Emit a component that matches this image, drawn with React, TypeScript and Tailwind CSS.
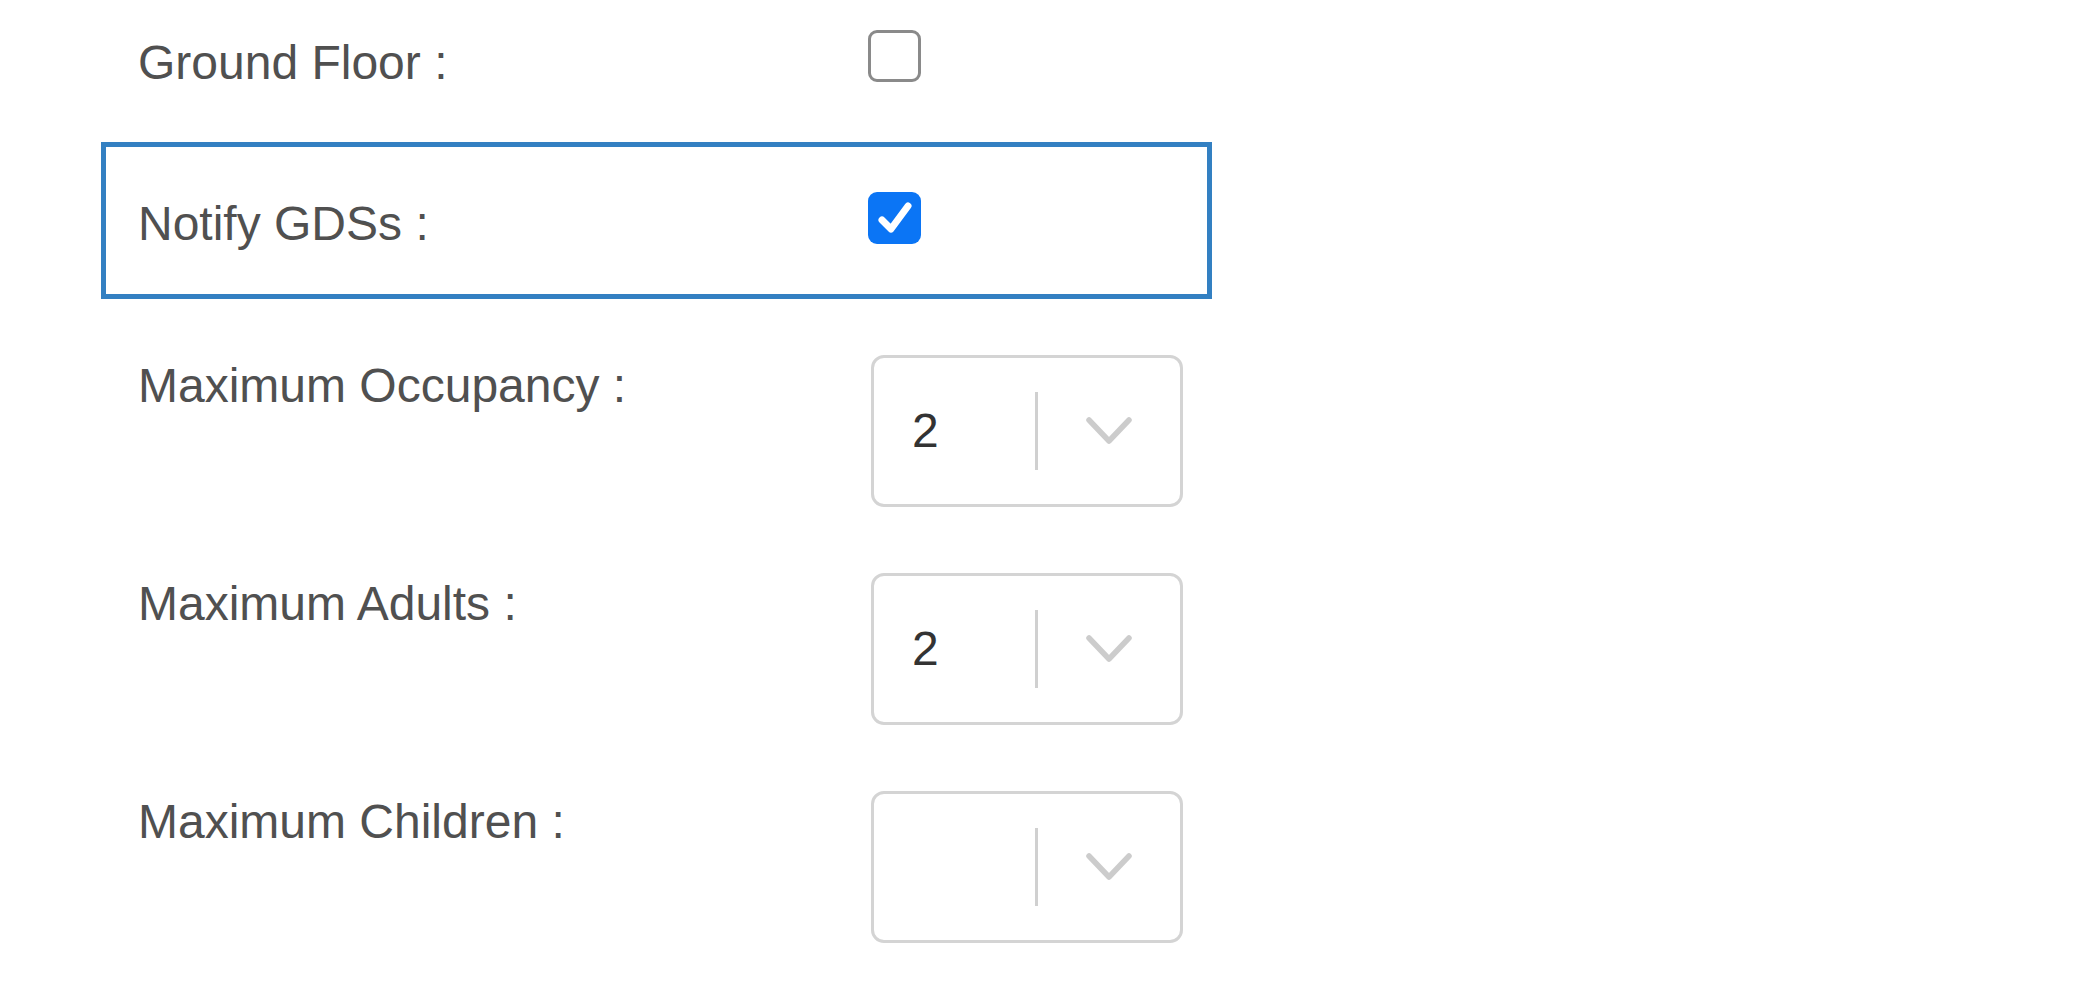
import React from "react";

function Chevron() {
  return (
    <svg width="50" height="32" viewBox="0 0 50 32" fill="none">
      <polyline points="5,5 25,26 45,5" stroke="#cccccc" strokeWidth="5.5" strokeLinecap="round" strokeLinejoin="round" />
    </svg>
  );
}

function Select({ value }: { value: string }) {
  return (
    <div className="flex h-[152px] w-[312px] items-center rounded-[13px] border-[3px] border-[#d4d4d4] bg-white">
      <div className="flex-1 pl-[38px] text-[48px] leading-[52px] text-[#333]">{value}</div>
      <div className="h-[78px] w-[3px] bg-[#d0d0d0]" />
      <div className="flex w-[142px] items-center justify-center">
        <Chevron />
      </div>
    </div>
  );
}

function Checkbox({ checked }: { checked: boolean }) {
  if (checked) {
    return (
      <div className="flex h-[52px] w-[53px] items-center justify-center rounded-[9px] bg-[#0b75f5]">
        <svg width="52" height="52" viewBox="0 0 52 52" fill="none">
          <polyline points="13,28 22,37 39,14" stroke="white" strokeWidth="7" strokeLinecap="round" strokeLinejoin="round" />
        </svg>
      </div>
    );
  }
  return <div className="h-[52px] w-[53px] rounded-[9px] border-[3px] border-[#8a8a8a] bg-white" />;
}

export default function App() {
  return (
    <div
      className="h-[989px] w-full bg-white text-[#505050]"
      style={{ fontFamily: '"Liberation Sans", Arial, sans-serif' }}
    >
      {/* Ground Floor */}
      <div className="flex h-[82px] items-start pl-[138px] pt-[30px]">
        <div className="mt-[7px] w-[730px] text-[48px] leading-[52px]">Ground Floor :</div>
        <Checkbox checked={false} />
      </div>

      {/* Notify GDSs */}
      <div className="ml-[101px] mt-[60px] h-[157px] w-[1111px] border-[5px] border-[#3380c2] pl-[32px] pt-[45px]">
        <div className="flex items-start">
          <div className="mt-[6px] w-[730px] text-[48px] leading-[52px]">Notify GDSs :</div>
          <Checkbox checked={true} />
        </div>
      </div>

      {/* Selects */}
      <div className="mt-[56px] flex flex-col gap-[66px] pl-[138px]">
        <div className="flex items-start">
          <div className="mt-[5px] w-[733px] text-[48px] leading-[52px]">Maximum Occupancy :</div>
          <Select value="2" />
        </div>
        <div className="flex items-start">
          <div className="mt-[5px] w-[733px] text-[48px] leading-[52px]">Maximum Adults :</div>
          <Select value="2" />
        </div>
        <div className="flex items-start">
          <div className="mt-[5px] w-[733px] text-[48px] leading-[52px]">Maximum Children :</div>
          <Select value="" />
        </div>
      </div>
    </div>
  );
}
